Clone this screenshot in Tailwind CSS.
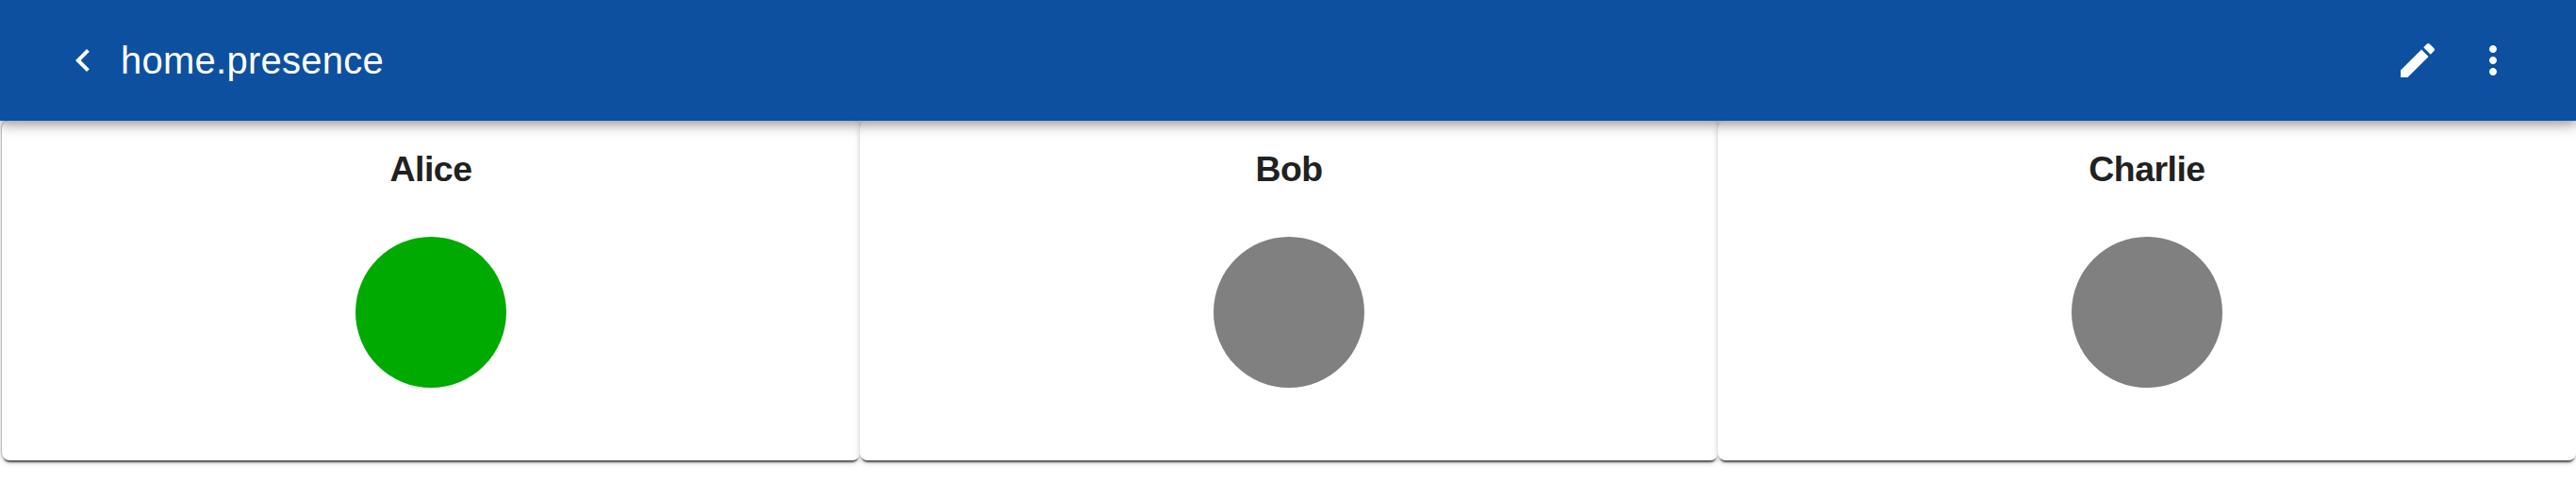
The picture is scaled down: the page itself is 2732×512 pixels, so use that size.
<!DOCTYPE html>
<html lang="en">
<head>
<meta charset="utf-8">
<title>home.presence</title>
<script src="https://cdn.jsdelivr.net/npm/@tailwindcss/browser@4"></script>
</head>
<body class="h-[512px] overflow-hidden bg-white font-['Liberation_Sans',Arial,sans-serif] text-[#212121]">
<header class="relative z-10 flex h-32 items-center bg-[#0d50a0] pr-16 pl-16 text-white shadow-[0_4px_8px_-2px_rgba(0,0,0,0.2),0_8px_10px_0_rgba(0,0,0,0.14),0_2px_20px_0_rgba(0,0,0,0.12)]">
  <svg class="size-12" viewBox="0 0 24 24" fill="currentColor"><path d="M15.41 7.41 14 6l-6 6 6 6 1.41-1.41L10.83 12z"/></svg>
  <h1 class="ml-4 text-[40px] leading-[48px] tracking-[0.25px]">home.presence</h1>
  <div class="ml-auto flex gap-8">
    <svg class="size-12" viewBox="0 0 24 24" fill="currentColor"><path d="M3 17.25V21h3.75L17.81 9.94l-3.75-3.75L3 17.25zM20.71 7.04c.39-.39.39-1.02 0-1.41l-2.34-2.34c-.39-.39-1.02-.39-1.41 0l-1.83 1.83 3.75 3.75 1.83-1.83z"/></svg>
    <svg class="size-12" viewBox="0 0 24 24" fill="currentColor"><path d="M12 8c1.1 0 2-.9 2-2s-.9-2-2-2-2 .9-2 2 .9 2 2 2zm0 2c-1.1 0-2 .9-2 2s.9 2 2 2 2-.9 2-2-.9-2-2-2zm0 6c-1.1 0-2 .9-2 2s.9 2 2 2 2-.9 2-2-.9-2-2-2z"/></svg>
  </div>
</header>
<main class="grid h-[360px] grid-cols-3 pl-0.5">
  <section class="flex flex-col items-center rounded-lg bg-white pt-[30px] shadow-[-1px_0_1px_0_rgba(0,0,0,0.2),0_4px_2px_-2px_rgba(0,0,0,0.65),0_2px_6px_0_rgba(0,0,0,0.22)]">
    <h2 class="text-[37.44px] leading-[43px] font-bold tracking-[-0.5px]">Alice</h2>
    <div class="mt-[50px] size-40 rounded-full bg-[#00aa00]"></div>
  </section>
  <section class="flex flex-col items-center rounded-lg bg-white pt-[30px] shadow-[0_4px_2px_-2px_rgba(0,0,0,0.65),0_2px_6px_0_rgba(0,0,0,0.22)]">
    <h2 class="text-[37.44px] leading-[43px] font-bold tracking-[-0.5px]">Bob</h2>
    <div class="mt-[50px] size-40 rounded-full bg-[#808080]"></div>
  </section>
  <section class="flex flex-col items-center rounded-lg bg-white pt-[30px] shadow-[0_4px_2px_-2px_rgba(0,0,0,0.65),0_2px_6px_0_rgba(0,0,0,0.22)]">
    <h2 class="text-[37.44px] leading-[43px] font-bold tracking-[-0.5px]">Charlie</h2>
    <div class="mt-[50px] size-40 rounded-full bg-[#808080]"></div>
  </section>
</main>
</body>
</html>
